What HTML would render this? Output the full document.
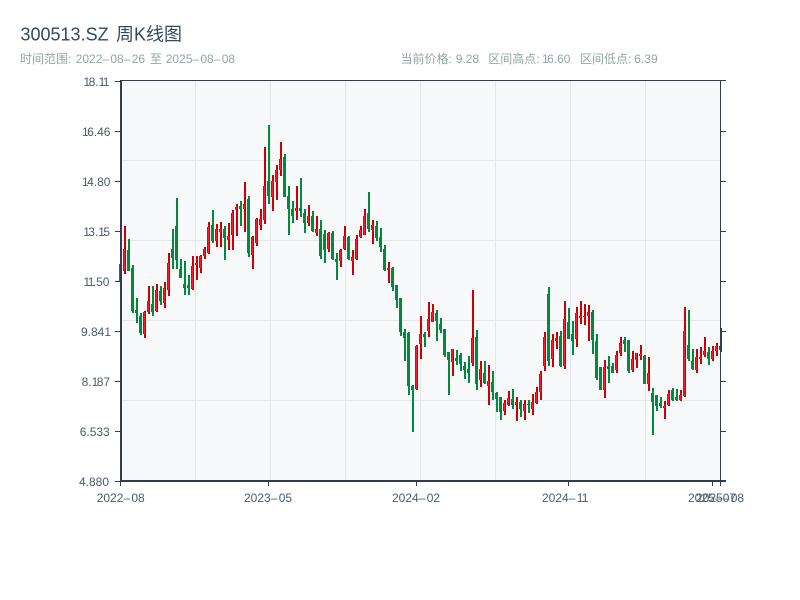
<!DOCTYPE html>
<html><head><meta charset="utf-8"><style>
html,body{margin:0;padding:0;background:#fff;width:800px;height:600px;overflow:hidden}
svg{display:block}
text{font-family:"Liberation Sans","Noto Sans CJK SC",sans-serif}
.d{letter-spacing:1.3px}
.o{letter-spacing:-1.6px}
</style></head><body>
<svg width="800" height="600" viewBox="0 0 800 600" xmlns="http://www.w3.org/2000/svg">
<text x="20.500" y="40.500" font-size="18" fill="#34495e">300513.SZ</text>
<text x="116" y="40.500" font-size="18" fill="#34495e">周K线图</text>
<g font-size="12" fill="#95a5a6">
<text x="20" y="63">时间范围:</text>
<text x="75.700" y="63">2022<tspan class="d">–</tspan>08<tspan class="d">–</tspan>26</text>
<text x="150" y="63">至</text>
<text x="165.700" y="63">2025<tspan class="d">–</tspan>08<tspan class="d">–</tspan>08</text>
<text x="400.500" y="63">当前价格:</text>
<text x="455.700" y="63">9.28</text>
<text x="488.300" y="63">区间高点:</text>
<text x="542" y="63"><tspan class="o">1</tspan>6.60</text>
<text x="580" y="63">区间低点:</text>
<text x="634.300" y="63">6.39</text>
</g>
<rect x="121" y="81" width="600" height="400" fill="#f8f9fa"/>
<path shape-rendering="crispEdges" stroke="#e4e6eb" stroke-width="1" fill="none" d="M195.500 81V481M270.500 81V481M345.500 81V481M420.500 81V481M495.500 81V481M570.500 81V481M645.500 81V481M121 160.500H720M121 240.500H720M121 320.500H720M121 400.500H720"/>
<defs>
<path id="gw" d="M121 261V283M129 239V271M133 265V313M137 298V323M141 313V335M153 286V316M161 286V305M173 229V269M177 198V269M181 259V278M185 261V295M189 275V295M213 210V243M225 226V260M241 201V226M249 196V257M269 125V204M285 154V197M289 186V235M293 201V223M301 178V217M305 209V233M313 211V232M321 220V259M325 230V263M333 231V260M337 253V280M349 236V260M369 192V232M377 221V241M381 228V252M385 245V271M393 267V291M397 285V308M401 298V336M405 329V361M409 332V395M413 385V432M425 332V347M437 310V341M441 318V333M445 329V357M449 352V395M457 350V365M461 353V371M465 362V379M469 356V383M477 330V390M485 361V384M493 371V400M497 392V412M501 397V420M513 389V409M521 400V417M529 400V413M549 287V366M561 331V367M569 308V339M573 321V355M593 310V354M597 334V380M601 367V390M609 356V383M613 363V373M625 337V352M629 340V373M645 355V384M653 388V435M657 395V411M661 397V408M673 388V401M677 389V401M689 310V361M693 349V370M709 347V365"/>
<path id="gb" d="M121 264V282M129 250V271M133 268V311M137 310V313M141 316V333M153 304V312M161 291V301M173 249V258M177 226V260M181 269V278M185 284V288M189 285V288M213 225V241M225 229V238M241 206V209M249 199V253M269 181V196M285 157V197M289 196V209M293 209V216M301 208V211M305 213V223M313 216V231M321 229V256M325 234V250M333 233V259M337 259V262M349 237V259M369 213V229M377 226V238M381 237V247M385 249V270M393 268V287M397 285V300M401 298V332M405 332V338M409 333V386M413 386V390M425 334V337M437 313V321M441 324V330M445 329V355M449 352V360M457 358V361M461 355V364M465 366V370M469 369V373M477 337V384M485 373V383M493 382V392M497 393V399M501 397V412M513 399V405M521 402V409M529 404V405M549 294V361M561 336V366M569 322V339M573 334V341M593 312V340M597 341V378M601 367V390M609 366V369M613 366V373M625 340V344M629 340V371M645 356V384M653 393V402M657 395V406M661 403V406M673 390V400M677 397V400M689 345V359M693 361V369M709 352V359"/>
<path id="rw" d="M125 226V274M145 311V338M149 286V314M157 284V312M165 282V308M169 253V296M193 256V290M197 256V280M201 255V273M205 247V259M209 222V254M217 224V247M221 222V247M229 223V250M233 210V250M237 204V236M245 182V232M253 236V269M257 218V246M261 209V230M265 147V224M273 175V211M277 165V200M281 142V176M297 186V220M309 205V226M317 216V236M329 232V252M341 249V267M345 226V250M353 250V275M357 235V260M361 226V238M365 209V235M373 220V244M389 262V283M417 345V390M421 316V359M429 302V337M433 304V322M453 349V376M473 290V366M481 361V387M489 365V405M505 400V415M509 391V406M517 397V421M525 400V420M533 394V415M537 387V404M541 371V400M545 332V371M553 334V367M557 332V349M565 301V369M577 307V347M581 301V324M585 304V325M589 305V341M605 360V398M617 351V373M621 337V356M633 351V372M637 353V368M641 345V360M649 357V391M665 401V419M669 390V406M681 390V401M685 307V397M697 349V373M701 347V364M705 337V357M713 346V361M717 343V356M721 328V352"/>
<path id="rb" d="M125 249V271M145 312V334M149 301V312M157 290V311M165 288V303M169 263V290M193 266V289M197 263V265M201 256V268M205 249V256M209 227V253M217 229V241M221 229V232M229 236V240M233 213V235M237 207V210M245 204V209M253 237V255M257 219V243M261 219V225M265 186V220M273 181V197M277 170V182M281 159V170M297 208V211M309 216V223M317 229V233M329 233V249M341 250V261M345 236V249M353 257V261M357 239V259M361 230V237M365 216V235M373 225V230M389 268V270M417 346V389M421 334V344M429 319V331M433 312V322M453 349V362M473 338V363M481 369V380M489 381V386M505 403V411M509 398V405M517 402V405M525 404V411M533 402V409M537 392V403M541 374V392M545 337V366M553 340V359M557 338V341M565 319V366M577 313V339M581 316V318M585 316V317M589 312V316M605 367V390M617 355V370M621 343V353M633 359V370M637 353V360M641 354V356M649 373V384M665 406V408M669 394V405M681 395V400M685 331V396M697 357V370M701 357V359M705 351V355M713 351V359M717 346V351M721 346V350"/>
</defs>
<g fill="none" shape-rendering="crispEdges">
<use href="#gw" stroke="#008a3c" stroke-width="2"/>
<use href="#rw" stroke="#cc0000" stroke-width="2"/>
<use href="#gb" stroke="#008a3c" stroke-width="2" transform="translate(-1 0)"/>
<use href="#rb" stroke="#d40a14" stroke-width="2" transform="translate(-1 0)"/>
<use href="#rb" stroke="#ff1a26" stroke-width="1" transform="translate(-.5 0)"/>
</g>
<path shape-rendering="crispEdges" stroke="#2c3e50" fill="none" stroke-width="1" d="M121 80.500H726M720.500 81V481M721 131.500H726M721 181.500H726M721 231.500H726M721 281.500H726M721 331.500H726M721 381.500H726M721 431.500H726M115 81.500H120M115 131.500H120M115 181.500H120M115 231.500H120M115 281.500H120M115 331.500H120M115 381.500H120M115 431.500H120M115 481.500H120M120.500 482V486M268.500 482V486M416.500 482V486M568.500 482V486M712.500 482V486M720.500 482V486"/>
<path shape-rendering="crispEdges" stroke="#2c3e50" fill="none" stroke-width="2" d="M121 80V482M120 481H726"/>
<g font-size="12" fill="#4a5c6e">
<text x="83.500" y="86"><tspan class="o">1</tspan>8.<tspan class="o">1</tspan><tspan class="o">1</tspan></text>
<text x="82" y="136"><tspan class="o">1</tspan>6.46</text>
<text x="82" y="186"><tspan class="o">1</tspan>4.80</text>
<text x="83.200" y="236"><tspan class="o">1</tspan>3.<tspan class="o">1</tspan>5</text>
<text x="83.500" y="286"><tspan class="o">1</tspan><tspan class="o">1</tspan>.50</text>
<text x="81" y="336">9.84<tspan class="o">1</tspan></text>
<text x="81.600" y="386">8.<tspan class="o">1</tspan>87</text>
<text x="79.700" y="436">6.533</text>
<text x="79" y="486">4.880</text>
<text x="96.700" y="502">2022<tspan class="d">–</tspan>08</text>
<text x="244" y="502">2023<tspan class="d">–</tspan>05</text>
<text x="392" y="502">2024<tspan class="d">–</tspan>02</text>
<text x="542" y="502">2024<tspan class="d">–</tspan><tspan class="o">1</tspan>1</text>
<text x="688" y="502">2025<tspan class="d">–</tspan>07</text>
<text x="696" y="502">2025<tspan class="d">–</tspan>08</text>
</g>
</svg>
</body></html>
